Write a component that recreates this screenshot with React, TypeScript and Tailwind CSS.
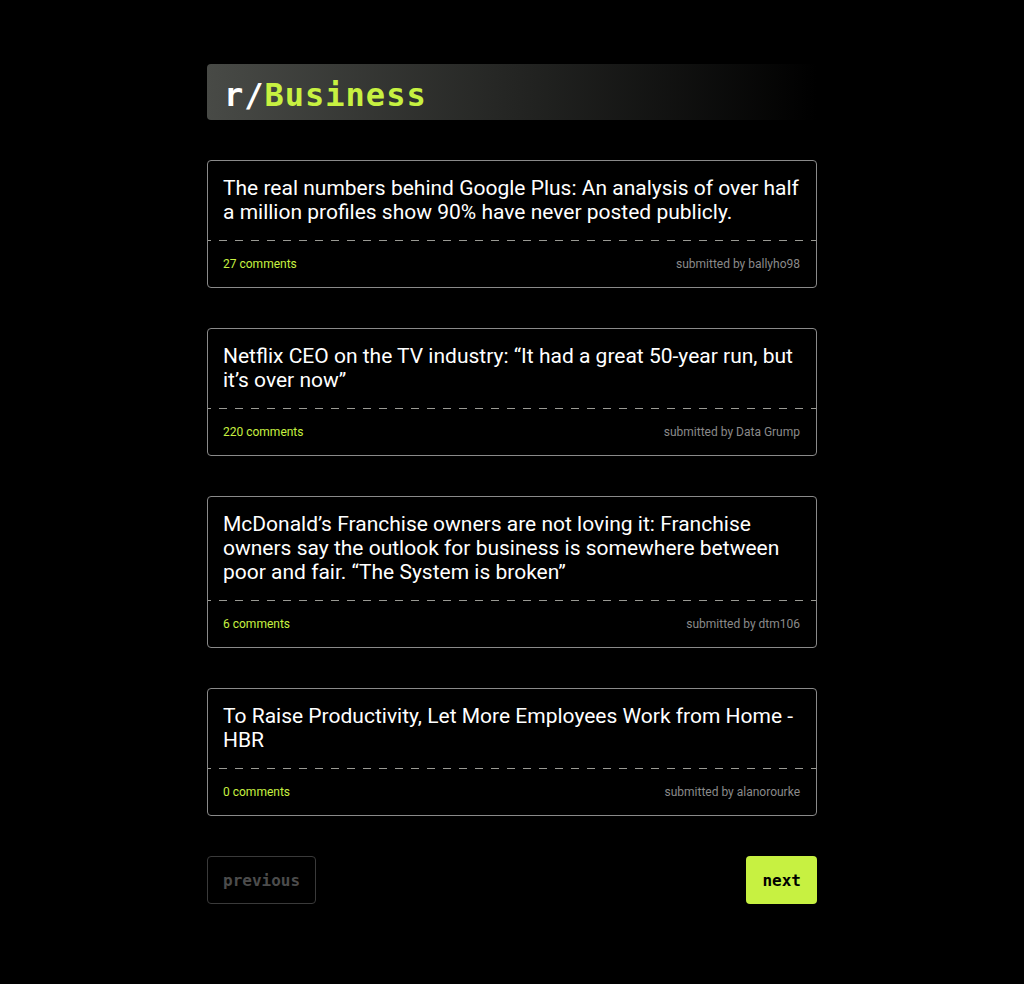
const posts = [
  {
    title: 'The real numbers behind Google Plus: An analysis of over half a million profiles show 90% have never posted publicly.',
    comments: 27,
    author: 'ballyho98',
  },
  {
    title: 'Netflix CEO on the TV industry: \u201cIt had a great 50-year run, but it\u2019s over now\u201d',
    comments: 220,
    author: 'Data Grump',
  },
  {
    title: 'McDonald\u2019s Franchise owners are not loving it: Franchise owners say the outlook for business is somewhere between poor and fair. \u201cThe System is broken\u201d',
    comments: 6,
    author: 'dtm106',
  },
  {
    title: 'To Raise Productivity, Let More Employees Work from Home - HBR',
    comments: 0,
    author: 'alanorourke',
  },
];

const mono = { fontFamily: '"DejaVu Sans Mono", "Liberation Mono", monospace' };

export default function App() {
  return (
    <div className="min-h-screen bg-black text-white" style={{ fontFamily: 'Roboto, "Noto Sans", sans-serif' }}>
      <div className="mx-auto w-[610px] pt-16 pb-20">
        <div className="h-14 rounded bg-[linear-gradient(to_right,#484a46,#000)] px-[17px] pt-[5px] flex items-center">
          <h1 className="text-[32px] font-bold leading-none tracking-[1px]" style={mono}>
            r/<span className="text-[#c7f141]">Business</span>
          </h1>
        </div>

        <div className="mt-10 flex flex-col gap-10">
          {posts.map((p) => (
            <div key={p.author} className="rounded border border-[#8a8a8a]">
              <div className="pl-[15px] pr-4 pt-[15px] pb-4 text-[21px] leading-6">{p.title}</div>
              <div className="h-px bg-[repeating-linear-gradient(to_right,#9a9a94_0_3px,transparent_3px_11px,#9a9a94_11px_16px)]" />
              <div className="pl-[15px] pr-4 py-4 flex items-center justify-between text-xs leading-[14px]">
                <span className="text-[#c7f141]">{p.comments} comments</span>
                <span className="text-[#8a8a8a]">submitted by {p.author}</span>
              </div>
            </div>
          ))}
        </div>

        <div className="mt-10 flex items-center justify-between">
          <button className="h-12 rounded border border-[#3a3a3a] px-[15px] pt-px text-base font-bold text-[#4c4c4c]" style={mono}>
            previous
          </button>
          <button className="h-12 rounded bg-[#c7f141] px-4 pt-px text-base font-bold text-black" style={mono}>
            next
          </button>
        </div>
      </div>
    </div>
  );
}
